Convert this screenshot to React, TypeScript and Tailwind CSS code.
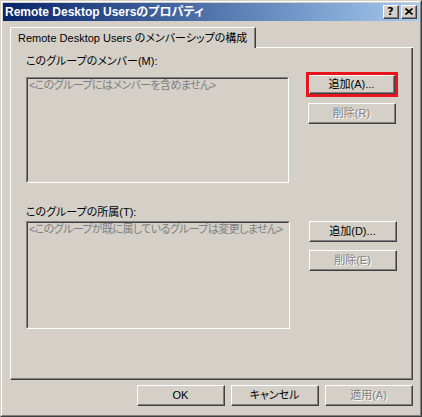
import type { ReactNode } from "react";

const raised =
    "border-t border-l border-r border-b border-t-white border-l-white border-r-[#404040] border-b-[#404040]";
const disabledText = "text-[#808080] [text-shadow:1px_1px_0_#ffffff]";

function Button({ children, disabled = false, className = "" }: { children: ReactNode; disabled?: boolean; className?: string }) {
    return (
        <div className={`${raised} bg-[#d4d0c8] ${className}`}>
            <div className="h-full border-r border-b border-r-[#808080] border-b-[#808080] flex items-center justify-center leading-none">
                <span className={disabled ? disabledText : "text-black"}>{children}</span>
            </div>
        </div>
    );
}

function ListBox({ text, className = "" }: { text: string; className?: string }) {
    return (
        <div className={`border-t border-l border-r border-b border-t-[#808080] border-l-[#808080] border-r-white border-b-white ${className}`}>
            <div className="h-full border-t border-l border-r border-b border-t-[#404040] border-l-[#404040] border-r-[#d4d0c8] border-b-[#d4d0c8] px-px leading-[13px] tracking-[-0.6px] text-[#808080] whitespace-nowrap overflow-hidden">
                {text}
            </div>
        </div>
    );
}

function TitleButton({ children }: { children: ReactNode }) {
    return (
        <div className={`${raised} w-[16px] h-[14px] bg-[#d4d0c8]`}>
            <div className="h-full border-r border-b border-r-[#808080] border-b-[#808080] flex items-center justify-center">
                {children}
            </div>
        </div>
    );
}

export default function App() {
    return (
        <div className='w-[422px] h-[417px] bg-[#d4d0c8] border-t border-l border-r border-b border-t-[#d4d0c8] border-l-[#d4d0c8] border-r-[#404040] border-b-[#404040] text-[11px] text-black font-["Liberation_Sans","Noto_Sans_CJK_JP",sans-serif] [font-feature-settings:"palt"]'>
            <div className="h-full border-t border-l border-r border-b border-t-white border-l-white border-r-[#808080] border-b-[#808080] p-px flex flex-col">
                {/* title bar */}
                <div className="h-[18px] flex items-center bg-linear-to-r from-[#0a246a] to-[#a6caf0] pl-[2px] pr-[2px]">
                    <span className="grow text-white font-bold text-[12px] leading-none">Remote Desktop Usersのプロパティ</span>
                    <div className="flex gap-[2px]">
                        <TitleButton>
                            <span className="font-bold text-[11px] leading-none font-['DejaVu_Sans',sans-serif]">?</span>
                        </TitleButton>
                        <TitleButton>
                            <svg width="8" height="7" viewBox="0 0 8 7">
                                <path d="M0.5 0.5 L7.5 6.5 M7.5 0.5 L0.5 6.5" stroke="#000" strokeWidth="1.6" fill="none" />
                            </svg>
                        </TitleButton>
                    </div>
                </div>

                {/* tab control */}
                <div className="mt-[6px] ml-[7px] mr-[6px] flex flex-col">
                    <div className="flex items-end h-[21px]">
                        <div className="w-[246px] h-[21px] border-t border-l border-r border-t-white border-l-white border-r-[#404040] rounded-tl-[2px]">
                            <div className="h-full border-r border-r-[#808080] pl-[7px] pt-[3px] leading-[14px] whitespace-nowrap">
                                Remote Desktop Users のメンバーシップの構成
                            </div>
                        </div>
                        <div className="grow h-px bg-white" />
                    </div>
                    <div className="h-[332px] border-l border-r border-b border-l-white border-r-[#404040] border-b-[#404040]">
                        <div className="h-full border-r border-b border-r-[#808080] border-b-[#808080] pl-[15px] pt-[6px] flex flex-col">
                            <div className="leading-[14px]">このグループのメンバー(M):</div>
                            <div className="flex mt-[4px] gap-[17px]">
                                <ListBox text="<このグループにはメンバーを含めません>" className="w-[263px] h-[106px] mt-[5px]" />
                                <div className="w-[92px] flex flex-col items-center">
                                    <div className="w-[92px] h-[25px] border-[3px] border-[#e8141c]">
                                        <Button className="w-[86px] h-[19px]">追加(A)...</Button>
                                    </div>
                                    <Button disabled className="w-[88px] h-[21px] mt-[6px]">削除(R)</Button>
                                </div>
                            </div>

                            <div className="leading-[14px] mt-[22px]">このグループの所属(T):</div>
                            <div className="flex mt-[2px] gap-[17px]">
                                <ListBox text="<このグループが既に属しているグループは変更しません>" className="w-[264px] h-[108px]" />
                                <div className="w-[92px] flex flex-col items-center">
                                    <Button className="w-[88px] h-[21px]">追加(D)...</Button>
                                    <Button disabled className="w-[88px] h-[21px] mt-[8px]">削除(E)</Button>
                                </div>
                            </div>
                        </div>
                    </div>
                </div>

                {/* dialog buttons */}
                <div className="mt-[5px] mr-[6px] flex justify-end gap-[6px]">
                    <Button className="w-[88px] h-[21px]">OK</Button>
                    <Button className="w-[88px] h-[21px]">キャンセル</Button>
                    <Button disabled className="w-[88px] h-[21px]">適用(A)</Button>
                </div>
            </div>
        </div>
    );
}
